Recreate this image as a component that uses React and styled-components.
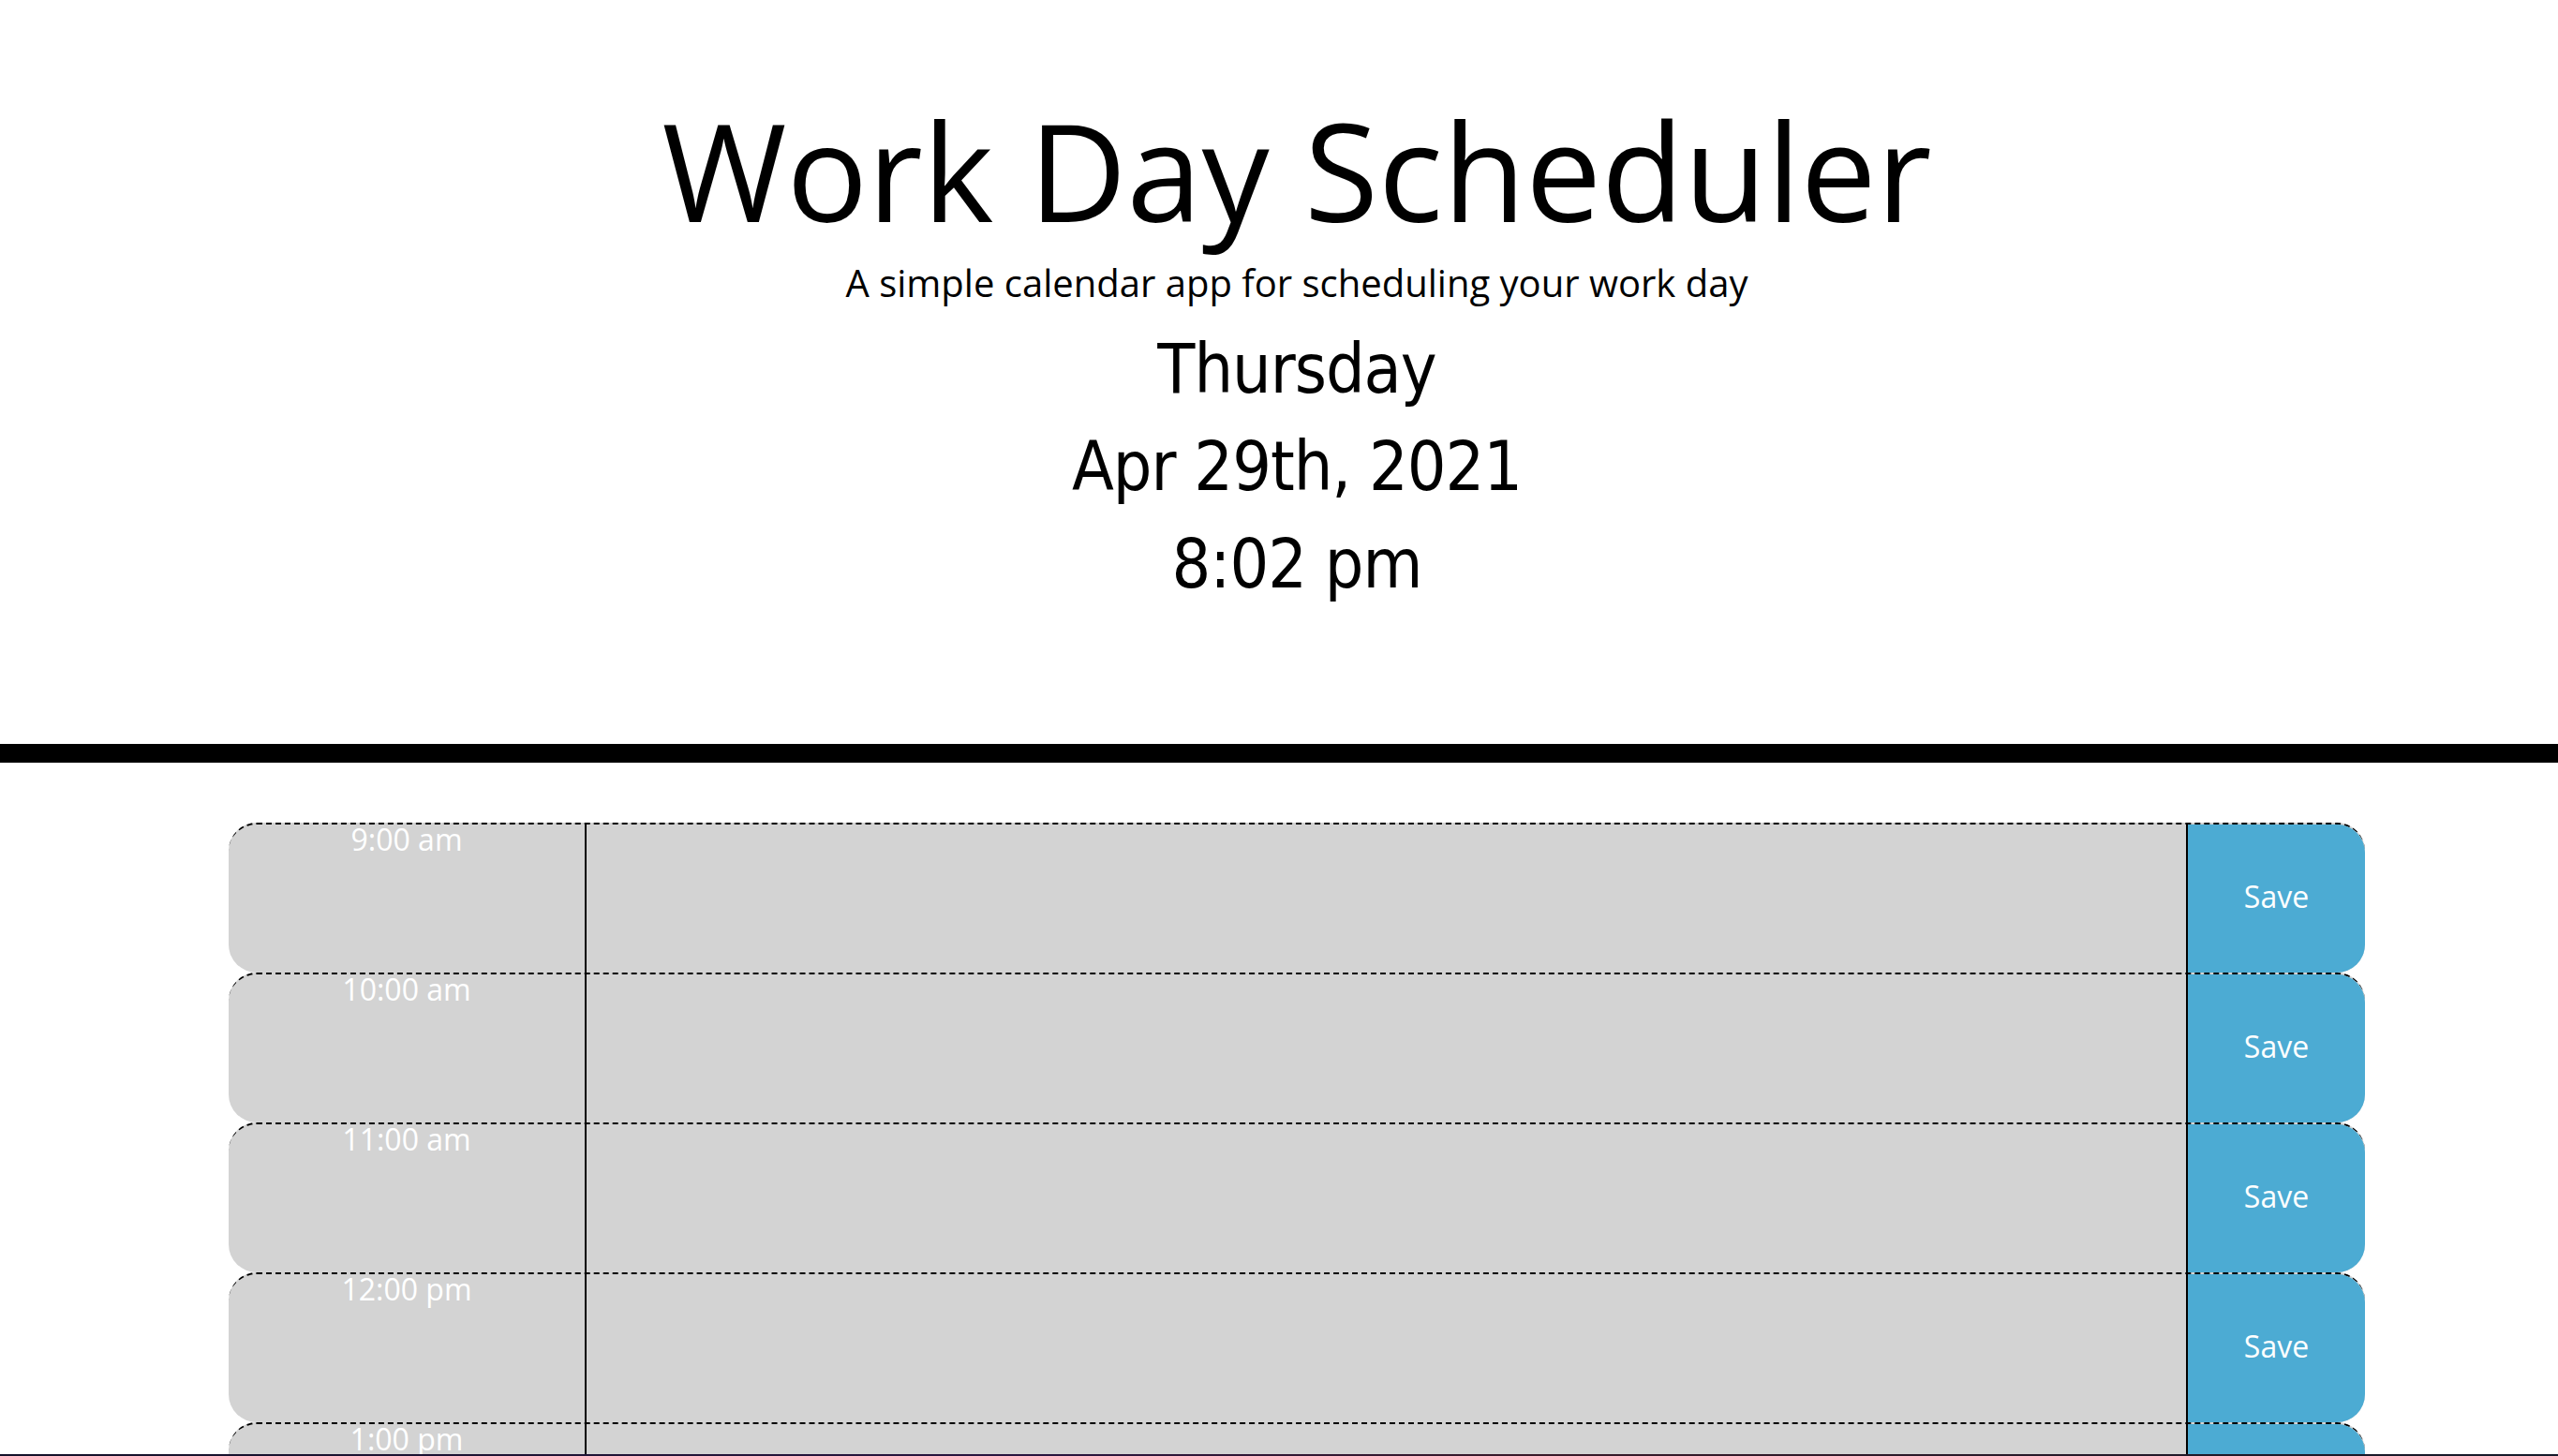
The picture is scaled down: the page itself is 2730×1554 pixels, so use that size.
import styled, { createGlobalStyle } from "styled-components";

const GlobalStyle = createGlobalStyle`
  html, body {
    margin: 0;
    padding: 0;
    overflow: hidden;
    background: #ffffff;
  }
  * {
    box-sizing: border-box;
  }
`;

const hours = ["9:00 am", "10:00 am", "11:00 am", "12:00 pm", "1:00 pm", "2:00 pm"];

const App = () => {
  return (
    <Page>
      <GlobalStyle />
      <Header>
        <Title>Work Day Scheduler</Title>
        <Lead>A simple calendar app for scheduling your work day</Lead>
        <DateLine>Thursday</DateLine>
        <DateLine>Apr 29th, 2021</DateLine>
        <DateLine>8:02 pm</DateLine>
      </Header>
      <Container>
        {hours.map((hour) => (
          <TimeBlock key={hour}>
            <Hour>{hour}</Hour>
            <Note />
            <SaveBtn>Save</SaveBtn>
          </TimeBlock>
        ))}
      </Container>
      <Dock />
    </Page>
  );
};

const Page = styled.div`
  width: 2768px;
  font-family: "Open Sans", "Liberation Sans", sans-serif;
  color: #000;
`;

const Header = styled.header`
  padding: 95px 0 140px;
  text-align: center;
  border-bottom: 20px solid #000;
  margin-bottom: 64px;
`;

const Title = styled.h1`
  margin: 0;
  font-size: 144px;
  font-weight: 400;
  line-height: 172px;
`;

const Lead = styled.p`
  margin: 5px 0 10px;
  font-size: 40px;
  font-weight: 400;
  line-height: 60px;
`;

const DateLine = styled.p`
  margin: 0;
  font-family: "DejaVu Sans Condensed", "DejaVu Sans", sans-serif;
  font-stretch: condensed;
  font-size: 73px;
  letter-spacing: -1px;
  line-height: 104px;
`;

const Container = styled.div`
  width: 2280px;
  margin: 0 auto;
`;

const TimeBlock = styled.div`
  display: grid;
  grid-template-columns: 380px 1fr 191px;
  height: 160px;
  background: #d3d3d3;
  border-top: 2px dashed #000;
  border-radius: 30px;
`;

const Hour = styled.div`
  color: #ffffff;
  font-size: 32px;
  line-height: 32px;
  text-align: center;
`;

const Note = styled.textarea`
  background: transparent;
  border: none;
  border-left: 2px solid #000;
  resize: none;
  padding: 20px;
  font-family: "Open Sans", sans-serif;
  font-size: 32px;
  outline: none;
`;

const SaveBtn = styled.button`
  border: none;
  border-left: 2px solid #000;
  border-top-right-radius: 30px;
  border-bottom-right-radius: 30px;
  background: #4cabd3;
  color: #ffffff;
  font-family: "Open Sans", sans-serif;
  font-size: 32px;
  padding: 0 0 6px;
  cursor: pointer;
`;

const Dock = styled.div`
  position: fixed;
  left: 0;
  bottom: 0;
  width: 100%;
  height: 2px;
  background: linear-gradient(90deg, #14122a, #2a1640 40%, #3a1a2a 60%, #141a2a);
`;

export default App;
